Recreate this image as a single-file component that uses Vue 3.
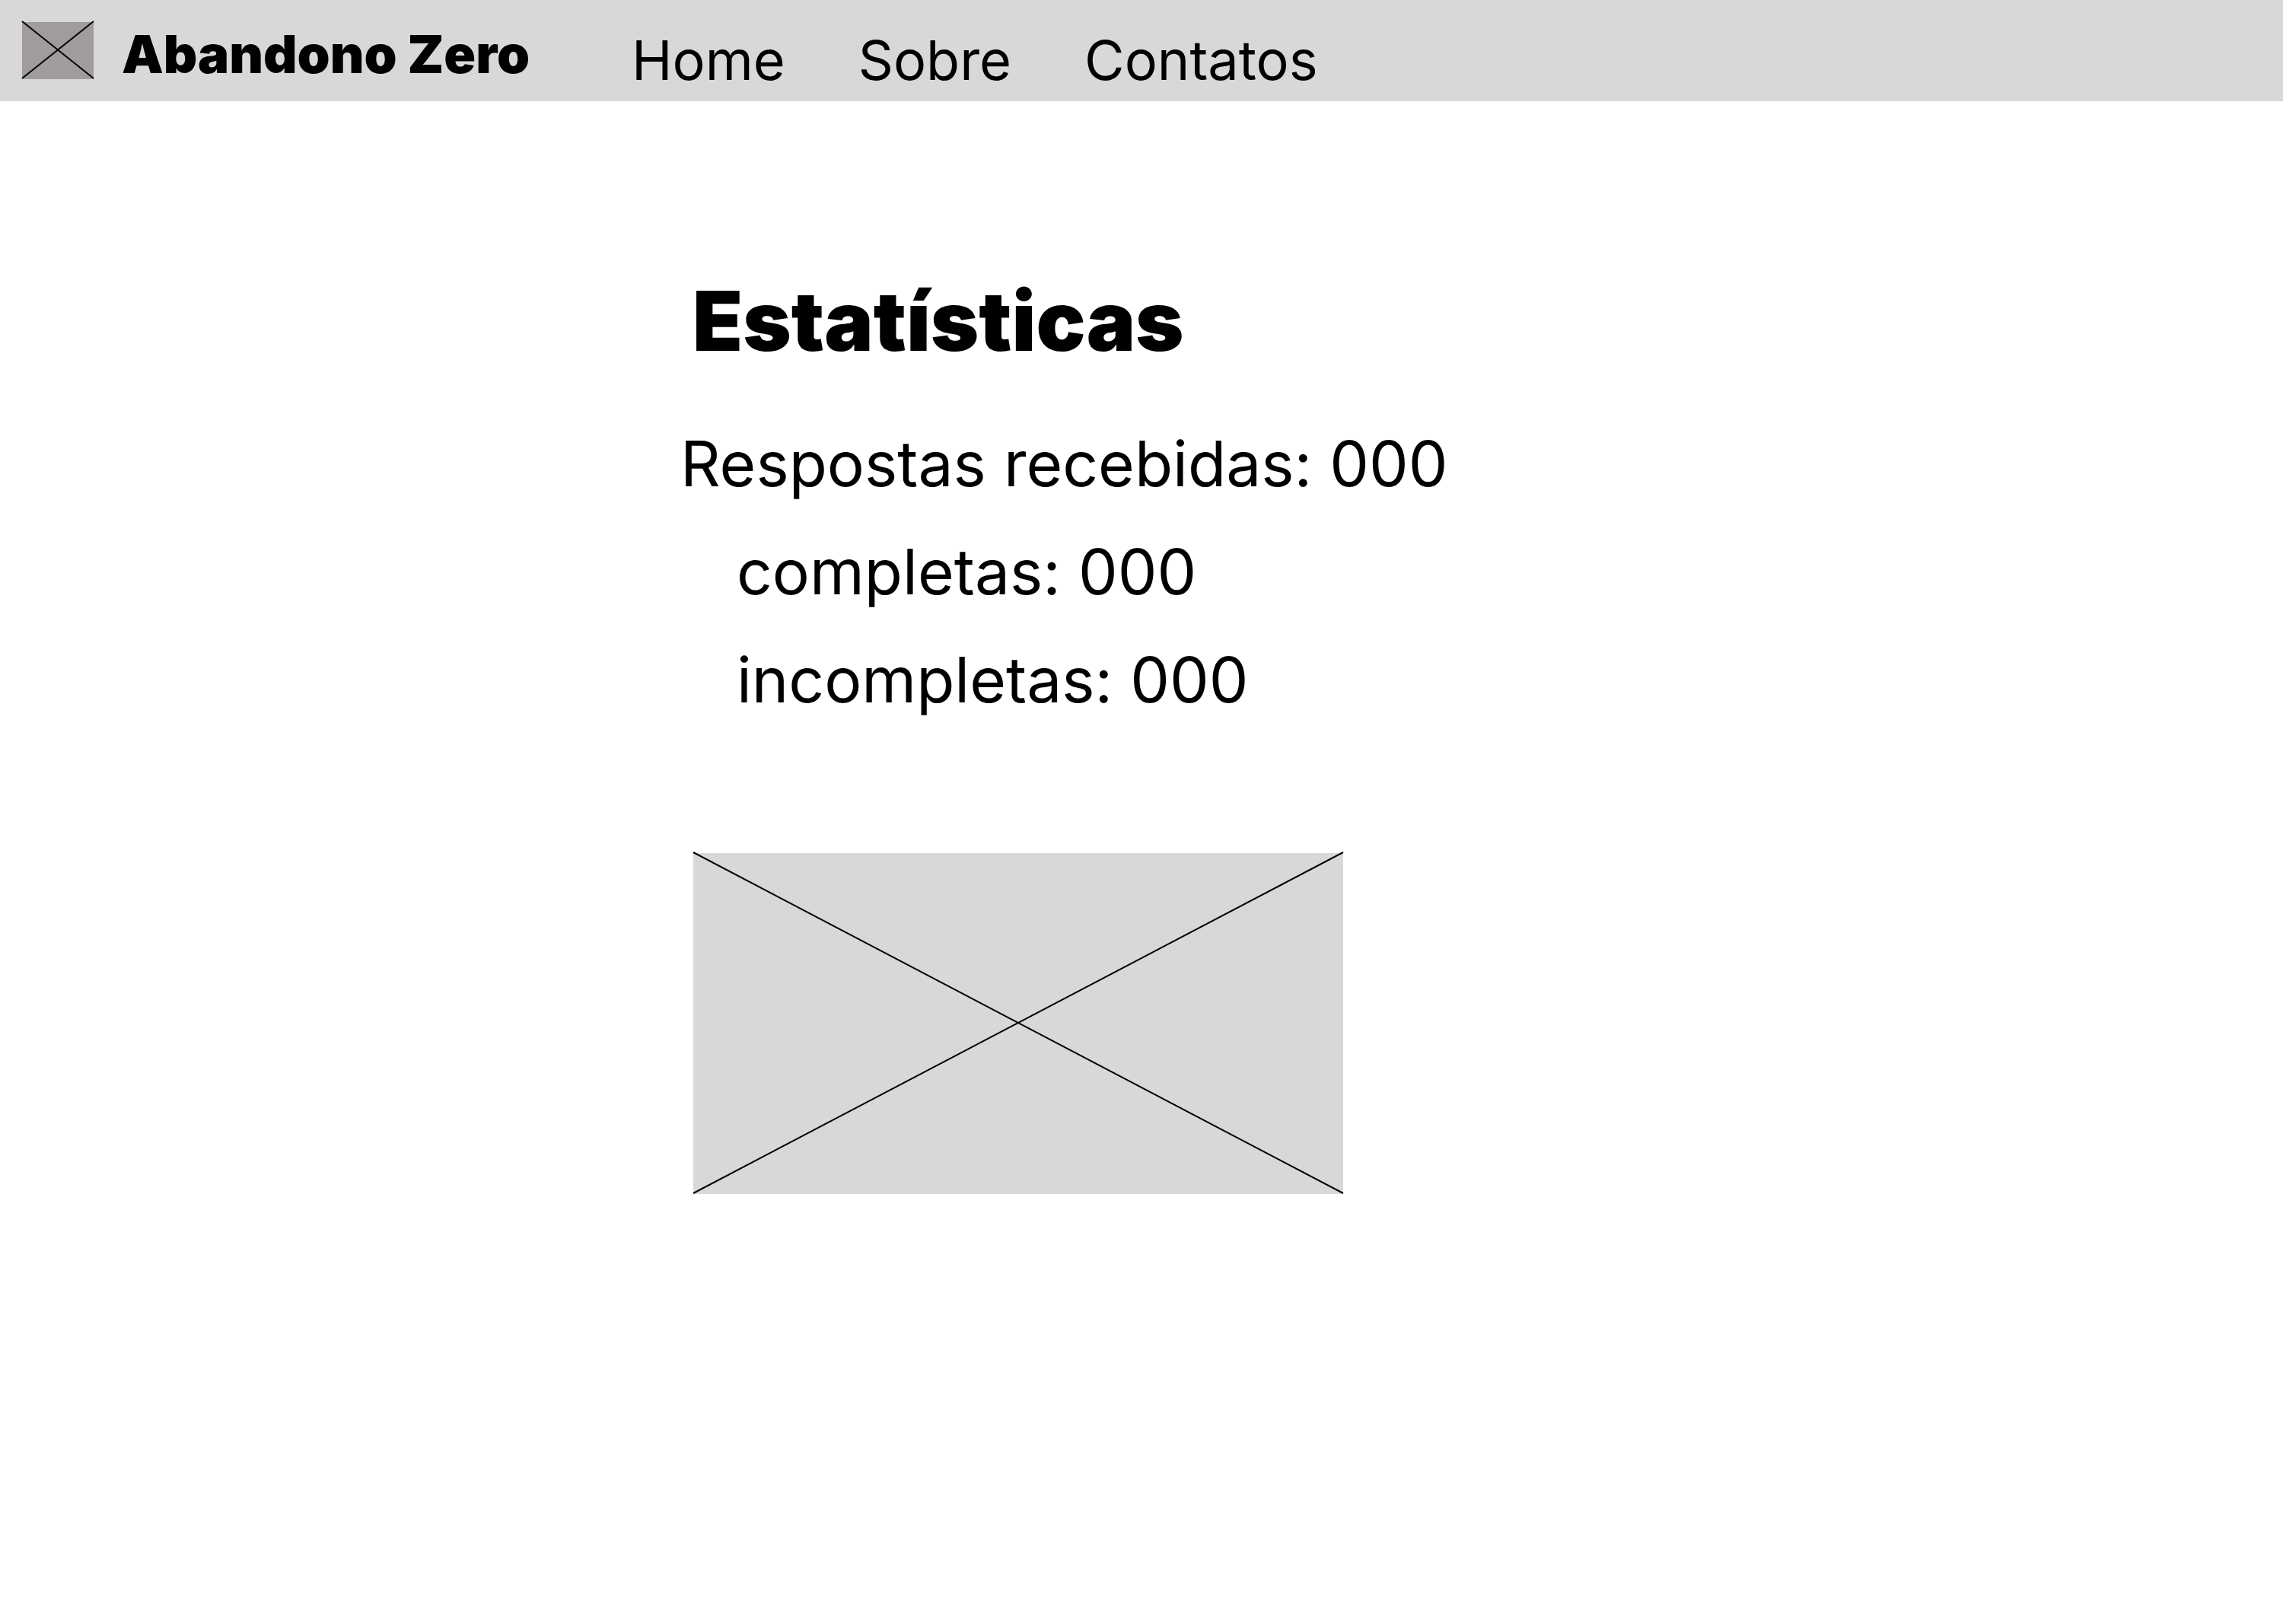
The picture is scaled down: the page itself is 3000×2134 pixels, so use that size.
<script setup>
const links = [
  { label: 'Home', href: '#home' },
  { label: 'Sobre', href: '#sobre' },
  { label: 'Contatos', href: '#contatos' },
]
</script>

<template>
  <div class="page">
    <header class="topbar">
      <svg class="logo" viewBox="0 0 94 75" preserveAspectRatio="none" aria-hidden="true">
        <rect width="94" height="75" fill="#a09c9b" />
        <path d="M0 -1L94 74M94 -1L0 74" stroke="#000" stroke-width="2" />
      </svg>
      <span class="brand">Abandono Zero</span>
      <nav class="nav">
        <a v-for="link in links" :key="link.label" :href="link.href">{{ link.label }}</a>
      </nav>
    </header>

    <main class="content">
      <h1>Estatísticas</h1>
      <section class="stats">
        <p>Respostas recebidas: 000</p>
        <ul>
          <li>completas: 000</li>
          <li>incompletas: 000</li>
        </ul>
      </section>
      <svg class="chart" viewBox="0 0 854 448" preserveAspectRatio="none" role="img" aria-label="Gráfico">
        <rect width="854" height="448" fill="#d8d8d8" />
        <path d="M0 -1L854 447M854 -1L0 447" stroke="#000" stroke-width="2" />
      </svg>
    </main>
  </div>
</template>

<style>
body {
  margin: 0;
  background: #fff;
}
</style>

<style scoped>
.page {
  min-height: 100vh;
  color: #000;
  font-family: Inter, "Liberation Sans", sans-serif;
}

.topbar {
  display: flex;
  align-items: flex-start;
  box-sizing: border-box;
  height: 133px;
  padding: 29px 29px 0;
  background: #d8d8d8;
}

.logo {
  flex: none;
  width: 94px;
  height: 75px;
  overflow: visible;
}

.brand {
  width: 632px;
  margin-left: 37px;
  font-size: 69px;
  font-weight: 900;
  line-height: 84px;
  white-space: nowrap;
}

.nav {
  display: flex;
  gap: 96px;
  margin-left: 38px;
  padding-top: 8px;
  font-size: 72px;
  line-height: 84px;
}

.nav a {
  color: inherit;
  text-decoration: none;
}

.content {
  padding: 240px 29% 0 29.8%;
}

h1 {
  margin: 0;
  padding-left: 16px;
  font-size: 108px;
  font-weight: 900;
  line-height: 98px;
  white-space: nowrap;
}

.stats {
  margin-top: 68px;
  font-size: 82px;
  line-height: 142px;
  white-space: nowrap;
}

.stats p {
  margin: 0;
}

.stats ul {
  margin: 0;
  padding-left: 74px;
  list-style: none;
}

.chart {
  display: block;
  width: 854px;
  max-width: 100%;
  height: 448px;
  margin: 156px 0 0 17px;
  overflow: visible;
}
</style>
